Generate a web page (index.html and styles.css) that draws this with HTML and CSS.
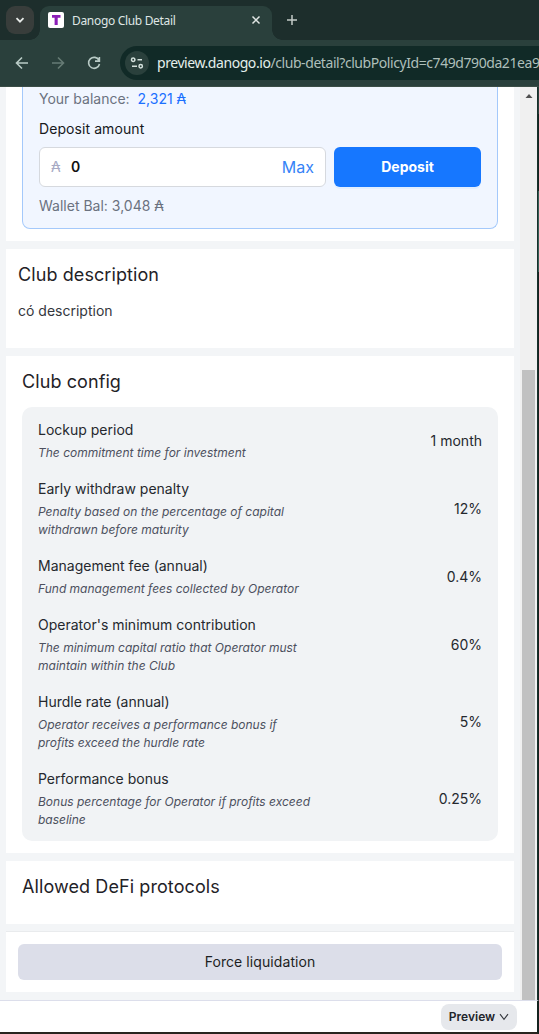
FILE: index.html
```html
<!DOCTYPE html>
<html lang="en">
<head>
<meta charset="utf-8">
<title>Danogo Club Detail</title>
<link rel="stylesheet" href="styles.css">
</head>
<body>
<div class="window">
  <header class="tabstrip">
    <div class="tab-search"><svg width="28" height="28" viewBox="0 0 28 28"><path d="M10.500 12.200L14 15.700L17.500 12.200" fill="none" stroke="#e6eae8" stroke-width="1.800"/></svg></div>
    <div class="tab">
      <svg class="favicon" width="16" height="16" viewBox="0 0 16 16"><rect width="16" height="16" rx="2" fill="#fff"/><path d="M4 3h8.500v2.800H9.700V13H6.600V5.800H4z" fill="#8b1fb8"/></svg>
      <span class="tab-title">Danogo Club Detail</span>
      <svg class="tab-close" width="10" height="10" viewBox="0 0 10 10"><path d="M1.500 1.500l7 7M8.500 1.500l-7 7" stroke="#e1e6e4" stroke-width="1.500"/></svg>
    </div>
    <svg class="new-tab" width="12" height="12" viewBox="0 0 12 12"><path d="M6 1v10M1 6h10" stroke="#c3cbc8" stroke-width="1.500"/></svg>
  </header>
  <nav class="toolbar">
    <svg class="nav-icon" width="16" height="16" viewBox="0 0 16 16"><path d="M14 8H3M8 2.500L2.500 8L8 13.500" fill="none" stroke="#b9cbc6" stroke-width="1.600"/></svg>
    <svg class="nav-icon" width="16" height="16" viewBox="0 0 16 16"><path d="M2 8H13M8 2.500L13.500 8L8 13.500" fill="none" stroke="#667b75" stroke-width="1.600"/></svg>
    <svg class="nav-icon" width="16" height="16" viewBox="0 0 16 16"><path d="M13 5.300A5.500 5.500 0 1 0 13.500 9M13.400 2v4.100H9" fill="none" stroke="#b9cbc6" stroke-width="1.600"/></svg>
    <div class="omnibox">
      <span class="site-info"><svg width="14" height="14" viewBox="0 0 14 14" fill="none" stroke="#d3e0dc" stroke-width="1.500"><circle cx="3.200" cy="3.700" r="1.700"/><path d="M7.500 3.700H12M2 10.300H7"/><circle cx="10.700" cy="10.300" r="1.700"/></svg></span>
      <span class="url"><b>preview.danogo.io</b>/club-detail?clubPolicyId=c749d790da21ea9</span>
    </div>
  </nav>
  <div class="viewport">
    <main class="content">
      <section class="card deposit-card">
        <div class="deposit">
          <p class="balance">Your balance: <strong>2,321 ₳</strong></p>
          <label class="label">Deposit amount</label>
          <div class="deposit-row">
            <div class="field"><span class="ada">₳</span><span class="amount">0</span><a class="max">Max</a></div>
            <button class="primary">Deposit</button>
          </div>
          <p class="wallet">Wallet Bal: <span>3,048 ₳</span></p>
        </div>
      </section>
      <section class="card description">
        <h2>Club description</h2>
        <p>có description</p>
      </section>
      <section class="card config-card">
        <h2>Club config</h2>
        <div class="config">
          <div class="row"><div><h3>Lockup period</h3><p>The commitment time for investment</p></div><span>1 month</span></div>
          <div class="row"><div><h3>Early withdraw penalty</h3><p>Penalty based on the percentage of capital<br>withdrawn before maturity</p></div><span>12%</span></div>
          <div class="row"><div><h3>Management fee (annual)</h3><p>Fund management fees collected by Operator</p></div><span>0.4%</span></div>
          <div class="row"><div><h3>Operator's minimum contribution</h3><p>The minimum capital ratio that Operator must<br>maintain within the Club</p></div><span>60%</span></div>
          <div class="row"><div><h3>Hurdle rate (annual)</h3><p>Operator receives a performance bonus if<br>profits exceed the hurdle rate</p></div><span>5%</span></div>
          <div class="row"><div><h3>Performance bonus</h3><p>Bonus percentage for Operator if profits exceed<br>baseline</p></div><span>0.25%</span></div>
        </div>
      </section>
      <section class="card protocols"><h2>Allowed DeFi protocols</h2></section>
      <section class="card actions"><button class="secondary">Force liquidation</button></section>
    </main>
    <aside class="scrollbar"><svg width="8" height="4" viewBox="0 0 8 4"><path d="M0.500 4L4 0L7.500 4z" fill="#505050"/></svg><div class="thumb"></div></aside>
    <div class="edge"></div>
  </div>
  <footer class="bottombar">
    <button class="preview">Preview <svg width="10" height="8" viewBox="0 0 10 8"><path d="M1 1.200L5 6.300L9 1.200" fill="none" stroke="#33363c" stroke-width="1.100"/></svg></button>
  </footer>
</div>
</body>
</html>
```
FILE: styles.css
```css
* { box-sizing: border-box; }
body { margin: 0; overflow: hidden; font-family: Inter, "Liberation Sans", sans-serif; font-size: 14px; line-height: 22px; color: #25282e; }
h2, h3, p { margin: 0; font-weight: 400; white-space: nowrap; }
button { font-family: inherit; border: 0; padding: 0; }
svg { display: block; flex: none; }

.window { width: 539px; height: 1034px; display: flex; flex-direction: column; background: #fff; }

.tabstrip { height: 40px; flex: none; display: flex; padding: 6px; background: #1d2e2c; }
.tab-search { width: 28px; height: 28px; border-radius: 9px; background: #383d3b; }
.tab { position: relative; width: 232px; height: 34px; margin-left: 6px; padding: 0 11px 6px 8px; display: flex; align-items: center; border-radius: 9px 9px 0 0; background: #2a403c; }
.tab::before, .tab::after { content: ""; position: absolute; bottom: 0; width: 10px; height: 10px; }
.tab::before { left: -10px; background: radial-gradient(circle at 0 0, transparent 9.5px, #2a403c 10px); }
.tab::after { right: -10px; background: radial-gradient(circle at 100% 0, transparent 9.5px, #2a403c 10px); }
.tab-title { flex: 1; margin: 2px 0 0 8px; font: 12px/16px "Noto Sans", "Open Sans", sans-serif; letter-spacing: -0.32px; color: #dfe6e4; white-space: nowrap; }
.new-tab { margin: 8px 0 0 14px; }

.toolbar { height: 47px; flex: none; display: flex; align-items: center; gap: 20px; padding: 0 0 1px 14px; background: #2a403c; border-bottom: 1px solid #3b4d46; overflow: hidden; }
.omnibox { flex: 1; min-width: 0; height: 34px; margin-left: -2px; padding-left: 5px; display: flex; align-items: center; border-radius: 17px 0 0 17px; background: #112a27; overflow: hidden; }
.site-info { width: 24px; height: 24px; flex: none; display: grid; place-items: center; border-radius: 50%; background: #2a403c; }
.url { margin: 1px 0 0 8px; font: 14px/20px "Noto Sans", "Open Sans", sans-serif; letter-spacing: -0.43px; color: #aebfba; white-space: nowrap; }
.url b { font-weight: 400; color: #e4efeb; }

.viewport { height: 913px; flex: none; display: flex; background: #f3f5f7; overflow: hidden; }
.content { width: 508px; margin: 0 6px; flex: none; display: flex; flex-direction: column; gap: 8px; }
.card { flex: none; background: #fff; }
h2 { font-size: 18px; line-height: 28px; letter-spacing: 0.09px; color: #1f2227; }

.deposit-card { height: 154px; padding: 0 16px 12px; }
.deposit { height: 142px; padding: 1px 16px 0; border: 1px solid #a4c9fb; border-top: 0; border-radius: 0 0 8px 8px; background: #f1f6ff; }
.balance, .wallet { height: 22px; color: #6b7280; }
.balance strong { margin-left: 4px; font-weight: 400; color: #1b70ff; }
.label { display: block; margin: 8px 0 7px; letter-spacing: 0.08px; color: #17191d; }
.deposit-row { display: flex; gap: 8px; }
.field { width: 287px; height: 40px; padding: 0 11px; display: flex; align-items: center; border: 1px solid #d6d9de; border-radius: 6px; background: #fff; }
.field .ada { width: 10px; color: #a7aac4; }
.amount { flex: 1; margin-left: 10px; font-weight: 600; color: #111; }
.max { font-size: 16px; color: #3683f7; }
.primary { width: 147px; height: 40px; padding-bottom: 1px; border-radius: 6px; background: #1677ff; box-shadow: 0 2px 0 #e2efff; color: #fff; font-size: 14px; font-weight: 700; }
.wallet { margin-top: 8px; }

.description { height: 99px; padding: 12px; }
.description p { margin-top: 11px; color: #34373d; }

.config-card { height: 497px; padding: 12px 16px; }
.config { height: 434px; margin-top: 11px; padding: 12px 16px; display: flex; flex-direction: column; gap: 16px; border-radius: 10px; background: #f1f3f5; }
.row { display: flex; align-items: center; justify-content: space-between; }
.row h3 { font-size: 14px; line-height: 22px; }
.row p { margin-top: 3px; font-size: 12px; line-height: 18px; font-style: italic; color: #4c505e; }

.protocols { height: 63px; padding: 12px 16px; }
.actions { height: 60px; padding: 12px; box-shadow: 0 -1px 0 #e9ebed; }
.secondary { display: block; width: 484px; height: 36px; padding-bottom: 1px; border-radius: 6px; background: #dcdee9; color: #1c1e23; font-size: 14px; letter-spacing: 0.08px; }

.scrollbar { width: 17px; flex: none; padding: 7px 2px 0; display: flex; flex-direction: column; align-items: center; background: #f0f0f0; }
.thumb { width: 13px; flex: 1; margin-top: 272px; background: #c1c1c1; }
.edge { width: 2px; background: linear-gradient(#2a403c 27px, #122521 27px 104px, #355f55 104px 185px, #14231f 185px); border-left: 1px solid #17302b; }

.bottombar { height: 34px; display: flex; justify-content: flex-end; padding: 3px 20px 0 0; border-top: 1px solid #dcdeeb; border-right: 2px solid #14231f; border-bottom: 2px solid #29251f; }
.preview { width: 76px; height: 26px; padding-bottom: 1px; display: flex; align-items: center; justify-content: center; gap: 4px; border-radius: 8px; background: #e6e8ec; color: #22252b; font-size: 12px; font-weight: 600; }
```
